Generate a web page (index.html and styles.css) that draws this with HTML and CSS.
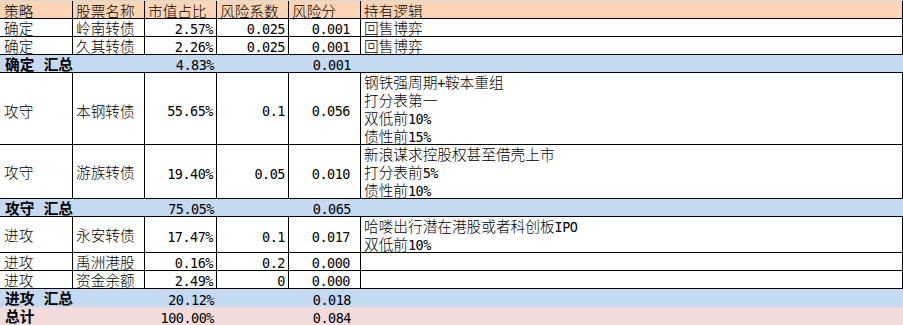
FILE: index.html
```html
<!DOCTYPE html>
<html lang="zh-CN">
<head>
<meta charset="utf-8">
<title>持仓风险</title>
<link rel="stylesheet" href="styles.css">
</head>
<body>
<div class="sheet">
  <div class="row hdr">
    <div class="c c1">策略</div><div class="c">股票名称</div><div class="c">市值占比</div><div class="c">风险系数</div><div class="c">风险分</div><div class="c">持有逻辑</div>
  </div>
  <div class="row data">
    <div class="c c1">确定</div><div class="c">岭南转债</div><div class="c n">2.57%</div><div class="c n">0.025</div><div class="c n s">0.001</div><div class="c">回售博弈</div>
  </div>
  <div class="row data">
    <div class="c c1">确定</div><div class="c">久其转债</div><div class="c n">2.26%</div><div class="c n">0.025</div><div class="c n s">0.001</div><div class="c">回售博弈</div>
  </div>
  <div class="row sum line">
    <div class="c c1 b">确定 汇总</div><div class="c"></div><div class="c n">4.83%</div><div class="c"></div><div class="c n s">0.001</div><div class="c"></div>
  </div>
  <div class="row data h4 bg">
    <div class="c c1">攻守</div><div class="c">本钢转债</div><div class="c n">55.65%</div><div class="c n">0.1</div><div class="c n s">0.056</div>
    <div class="c logic">钢铁强周期<span class="l">+</span>鞍本重组<br>打分表第一<br>双低前<span class="l">10%</span><br>债性前<span class="l">15%</span></div>
  </div>
  <div class="row data h3">
    <div class="c c1">攻守</div><div class="c">游族转债</div><div class="c n">19.40%</div><div class="c n">0.05</div><div class="c n s">0.010</div>
    <div class="c logic">新浪谋求控股权甚至借壳上市<br>打分表前<span class="l">5%</span><br>债性前<span class="l">10%</span></div>
  </div>
  <div class="row sum line">
    <div class="c c1 b">攻守 汇总</div><div class="c"></div><div class="c n">75.05%</div><div class="c"></div><div class="c n s">0.065</div><div class="c"></div>
  </div>
  <div class="row data h2">
    <div class="c c1">进攻</div><div class="c">永安转债</div><div class="c n">17.47%</div><div class="c n">0.1</div><div class="c n s">0.017</div>
    <div class="c logic">哈喽出行潜在港股或者科创板<span class="l">IPO</span><br>双低前<span class="l">10%</span></div>
  </div>
  <div class="row data">
    <div class="c c1">进攻</div><div class="c">禹洲港股</div><div class="c n">0.16%</div><div class="c n">0.2</div><div class="c n s">0.000</div><div class="c"></div>
  </div>
  <div class="row data">
    <div class="c c1">进攻</div><div class="c">资金余额</div><div class="c n">2.49%</div><div class="c n">0</div><div class="c n s">0.000</div><div class="c"></div>
  </div>
  <div class="row sum">
    <div class="c c1 b">进攻 汇总</div><div class="c"></div><div class="c n">20.12%</div><div class="c"></div><div class="c n s">0.018</div><div class="c"></div>
  </div>
  <div class="row total">
    <div class="c c1 b">总计</div><div class="c"></div><div class="c n">100.00%</div><div class="c"></div><div class="c n s">0.084</div><div class="c"></div>
  </div>
</div>
</body>
</html>
```

FILE: styles.css
```css
* {
  box-sizing: border-box;
  margin: 0;
  padding: 0;
}

body {
  margin: 0;
  background: #fff;
  color: #000;
  font-family: "Noto Sans CJK SC", sans-serif;
  font-size: 14.67px;
  font-weight: 300;
}

.sheet {
  width: 903px;
}

.row {
  display: grid;
  grid-template-columns: 73px 72px 72px 72px 72px 542px;
  height: 18px;
}

.hdr {
  height: 19px;
  background: #fcd5b4;
  border-top: 1px solid #d9d9d9;
  border-bottom: 1px solid #000;
}

.data {
  border-bottom: 1px solid #000;
}

.hdr .c,
.data .c {
  border-right: 1px solid #000;
}

.c {
  display: flex;
  align-items: center;
  padding: 0 3px;
  white-space: nowrap;
  line-height: 16px;
}

.c1 {
  padding-left: 4px;
}

.hdr .c {
  padding-top: 2px;
}

.n {
  justify-content: flex-end;
  font-family: "DejaVu Sans Mono", monospace;
  font-size: 13.5px;
  font-weight: 400;
  letter-spacing: -0.5px;
  line-height: 14px;
  padding-top: 3px;
}

.bg .c {
  padding-top: 3px;
}

.bg .n {
  padding-top: 4px;
}

.s {
  padding-right: 10px;
}

.sum {
  background: #c5d9f1;
}

.sum.line {
  border-bottom: 1px solid #000;
}

.total {
  background: #f2dcdb;
}

.b {
  font-weight: 700;
  word-spacing: 6px;
  padding-left: 5px;
}

.h2 { height: 36px; }
.h3 { height: 54px; }
.h4 { height: 72px; }

.c.logic,
.bg .c.logic {
  display: block;
  padding-top: 0;
  line-height: 18px;
}

.l {
  font-family: "DejaVu Sans Mono", monospace;
  font-size: 13.5px;
  font-weight: 400;
  letter-spacing: -0.5px;
  line-height: 1;
}
```
